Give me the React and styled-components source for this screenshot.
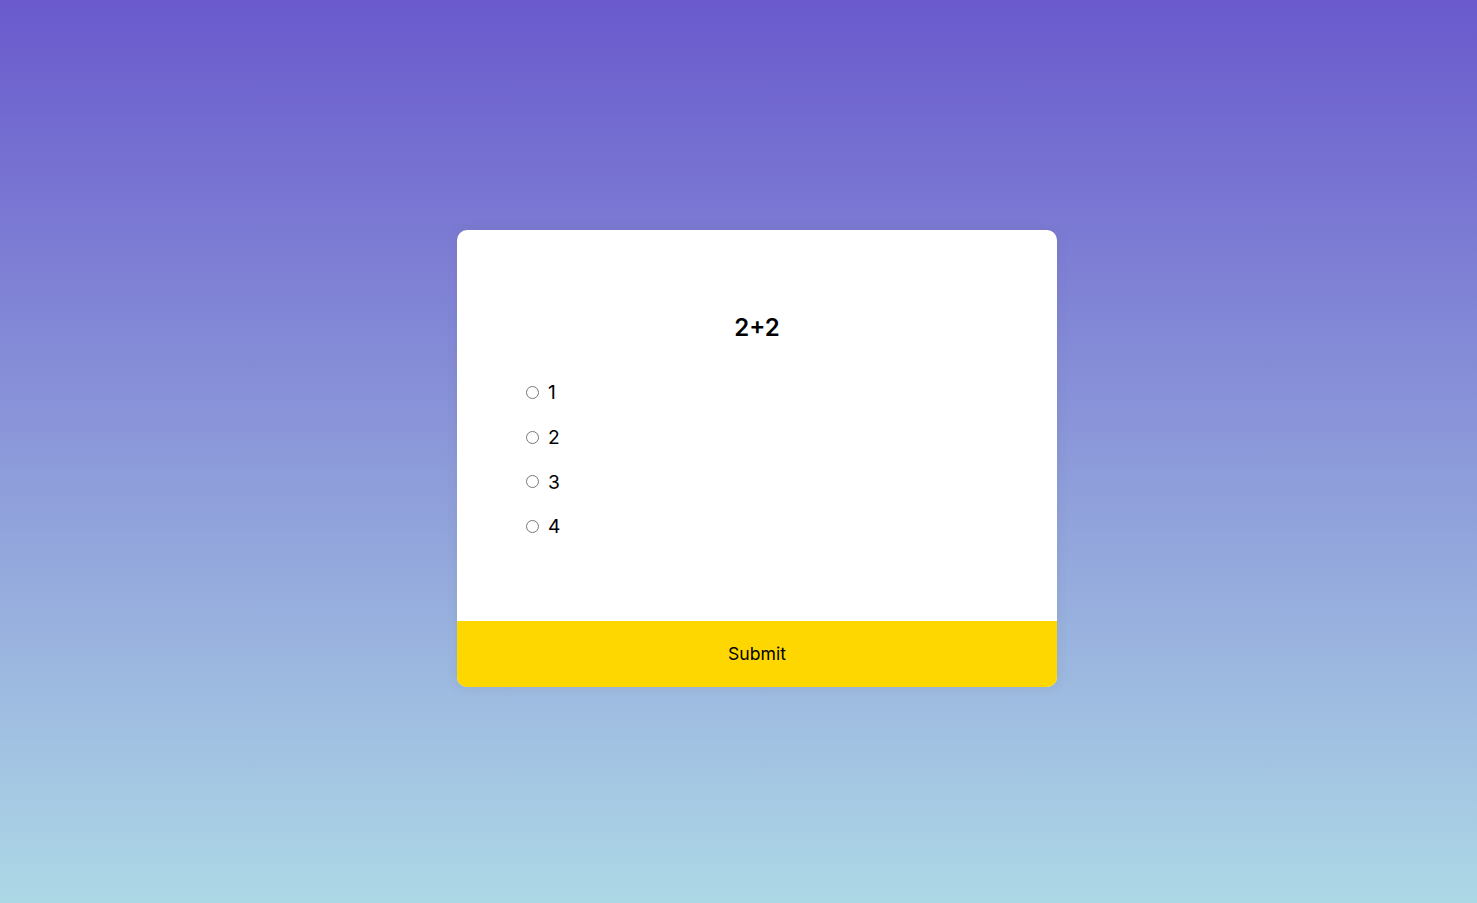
import React from "react";
import styled, { createGlobalStyle } from "styled-components";

const Global = createGlobalStyle`
  * { box-sizing: border-box; }
  html, body { margin: 0; padding: 0; }
  body {
    font-family: "Inter", "Noto Sans", sans-serif;
    background: linear-gradient(to bottom, #6a5acd, #add8e6);
    min-height: 100vh;
  }
`;

const Page = styled.div`
  min-height: 100vh;
  display: flex;
  justify-content: center;
  align-items: flex-start;
  padding: 230px 0 0 37px;
`;

const Card = styled.div`
  width: 600px;
  background: #fff;
  border-radius: 10px;
  box-shadow: 0 0 10px 2px rgba(100, 100, 100, 0.1);
  overflow: hidden;
`;

const Header = styled.div`
  padding: 64px;
`;

const Question = styled.h2`
  margin: 0;
  padding: 16px;
  text-align: center;
  font-size: 24px;
  line-height: 36px;
  font-weight: 600;
  color: #000;
`;

const Options = styled.ul`
  list-style: none;
  padding: 0;
  margin: 16px 0;
`;

const Option = styled.li`
  font-size: 19.2px;
  line-height: 28.8px;
  margin: 16px 0;
  display: flex;
  align-items: center;
  &:first-child { margin-top: 0; }
  &:last-child { margin-bottom: 0; }
`;

const Radio = styled.input`
  margin: 0 9px 0 5px;
  width: 13px;
  height: 13px;
`;

const Label = styled.label`
  cursor: pointer;
  color: #000;
`;

const SubmitButton = styled.button`
  display: block;
  width: 100%;
  border: none;
  background: #ffd700;
  color: #000;
  font-family: inherit;
  font-size: 17.6px;
  line-height: 24px;
  padding: 21px;
  cursor: pointer;
`;

const answers = ["1", "2", "3", "4"];

export default function App() {
  return (
    <>
      <Global />
      <Page>
        <Card>
          <Header>
            <Question>2+2</Question>
            <Options>
              {answers.map((a, i) => (
                <Option key={a}>
                  <Radio type="radio" name="answer" id={`a${i}`} />
                  <Label htmlFor={`a${i}`}>{a}</Label>
                </Option>
              ))}
            </Options>
          </Header>
          <SubmitButton>Submit</SubmitButton>
        </Card>
      </Page>
    </>
  );
}
